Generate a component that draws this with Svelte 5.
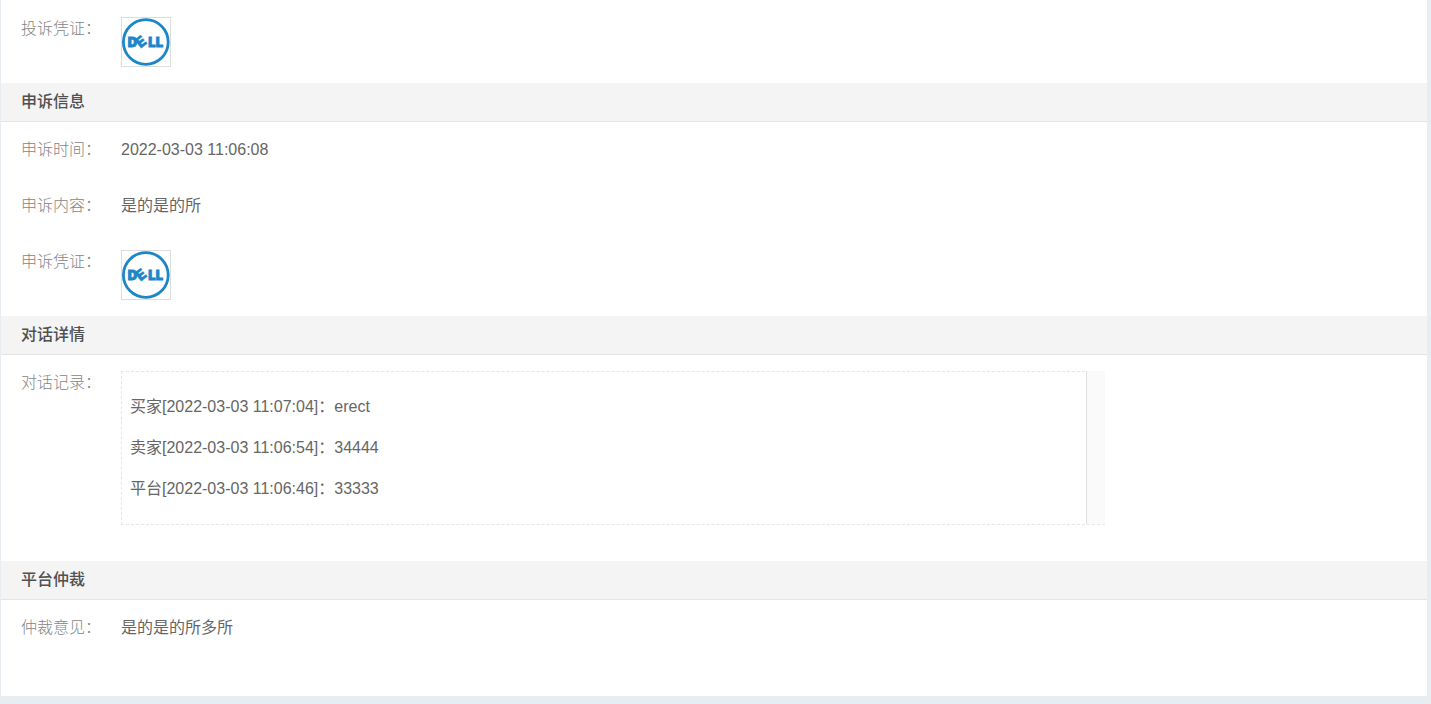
<script lang="ts">
  type Row = { label: string; value?: string; image?: boolean; chat?: boolean };
  type Section = { title?: string; rows: Row[] };

  const sections: Section[] = [
    { rows: [{ label: '投诉凭证', image: true }] },
    {
      title: '申诉信息',
      rows: [
        { label: '申诉时间', value: '2022-03-03 11:06:08' },
        { label: '申诉内容', value: '是的是的所' },
        { label: '申诉凭证', image: true }
      ]
    },
    { title: '对话详情', rows: [{ label: '对话记录', chat: true }] },
    { title: '平台仲裁', rows: [{ label: '仲裁意见', value: '是的是的所多所' }] }
  ];

  const messages = [
    { who: '买家', time: '2022-03-03 11:07:04', text: 'erect' },
    { who: '卖家', time: '2022-03-03 11:06:54', text: '34444' },
    { who: '平台', time: '2022-03-03 11:06:46', text: '33333' }
  ];
</script>

<main class="panel" lang="zh-CN">
  {#each sections as section}
    <section>
      {#if section.title}
        <h2>{section.title}</h2>
      {/if}
      <dl>
        {#each section.rows as row}
          <div class="row" class:row-chat={row.chat}>
            <dt>{row.label}：</dt>
            <dd>
              {#if row.image}
                <svg class="thumb" viewBox="0 0 48 48" role="img" aria-label="DELL">
                  <ellipse cx="23.8" cy="24" rx="22.4" ry="22.4" fill="none" stroke="#1c86c8" stroke-width="2.8" />
                  <g class="logo-text">
                    <text x="5.8" y="29">D</text>
                    <text class="tilted" transform="translate(18.4 30.8) rotate(-38)">E</text>
                    <text x="26.2" y="29">L</text>
                    <text x="33.8" y="29">L</text>
                  </g>
                </svg>
              {:else if row.chat}
                <div class="chat">
                  <ul>
                    {#each messages as message}
                      <li>{message.who}[{message.time}]：{message.text}</li>
                    {/each}
                  </ul>
                  <div class="track"></div>
                </div>
              {:else}
                {row.value}
              {/if}
            </dd>
          </div>
        {/each}
      </dl>
    </section>
  {/each}
</main>

<style>
  :global(body) {
    background: #e8edf2;
  }

  .panel {
    margin: 0 4px 8px 0;
    padding-top: 1px;
    padding-bottom: 40px;
    border-left: 1px solid #e8edf2;
    background: #fff;
    color: #666;
    font-family: 'Liberation Sans', 'Noto Sans CJK SC', sans-serif;
    font-size: 16px;
    line-height: 24px;
  }

  h2 {
    margin: 0;
    padding: 7px 20px;
    border-bottom: 1px solid #e4e4e4;
    background: #f4f4f4;
    color: #505050;
    font-size: 16px;
    font-weight: 500;
    line-height: 24px;
  }

  dl {
    margin: 0;
  }

  .row {
    display: flex;
    padding: 16px 20px;
  }

  .row-chat {
    padding-bottom: 36px;
  }

  dt {
    flex: none;
    width: 100px;
    color: #858585;
    font-weight: 300;
  }

  dd {
    flex: 1;
    margin: 0;
  }

  .thumb {
    display: block;
    box-sizing: border-box;
    width: 50px;
    height: 50px;
    border: 1px solid #ddd;
  }

  .logo-text {
    fill: #1c86c8;
    stroke: #1c86c8;
    stroke-width: 0.8px;
    font-family: Inter, sans-serif;
    font-size: 13px;
    font-weight: 900;
  }

  .tilted {
    font-size: 15px;
    stroke-width: 0.3px;
  }

  .chat {
    display: flex;
    box-sizing: border-box;
    width: 77%;
    max-width: 984px;
    border: 1px dashed #e6e6e6;
    border-right: none;
  }

  ul {
    display: flex;
    flex: 1;
    flex-direction: column;
    gap: 17px;
    margin: 0;
    padding: 23px 8px;
    list-style: none;
  }

  .track {
    width: 18px;
    margin-top: -1px;
    border-left: 1px solid #e0e0e0;
    background: #fafafa;
  }
</style>
